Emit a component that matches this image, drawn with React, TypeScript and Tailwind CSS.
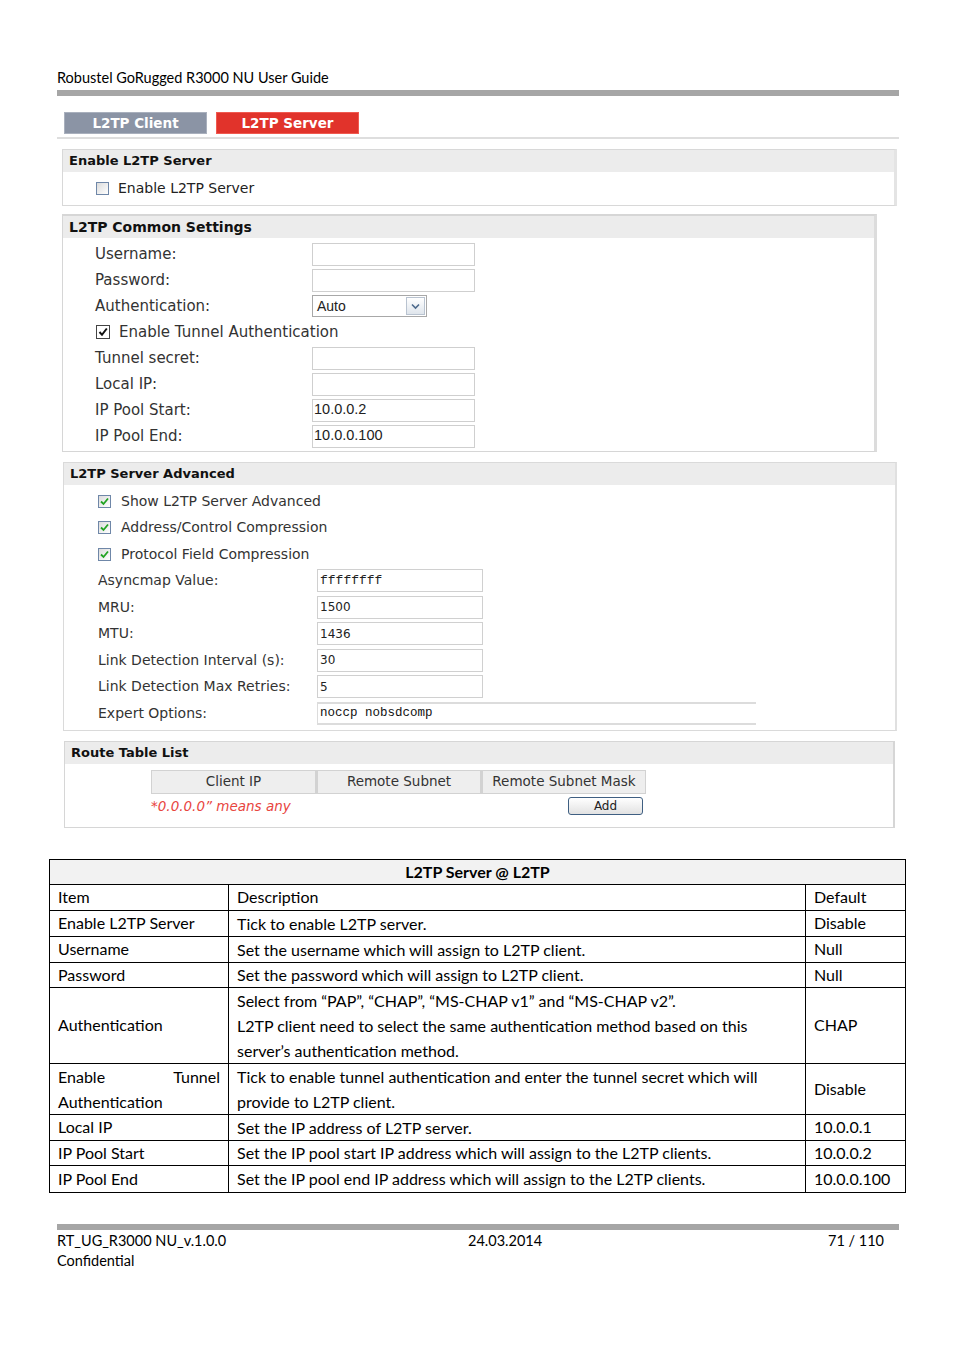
import React from 'react'

const UI = "font-['DejaVu_Sans',Verdana,sans-serif]"
const DOC = "font-['Lato','Open_Sans',sans-serif]"

function BlueBox({ checked }: { checked?: boolean }) {
  return (
    <span className="w-[13px] h-[13px] border border-[#6f87a8] bg-gradient-to-br from-[#dcdcdc] to-white flex items-center justify-center shrink-0">
      {checked && (
        <svg width="9" height="9" viewBox="0 0 9 9">
          <path d="M1 4.5 L3.5 7 L8 1.5" stroke="#22a322" strokeWidth="1.8" fill="none" />
        </svg>
      )}
    </span>
  )
}

function BlackBox() {
  return (
    <span className="w-[14px] h-[14px] border border-[#444] bg-white flex items-center justify-center shrink-0">
      <svg width="10" height="10" viewBox="0 0 10 10">
        <path d="M1.5 5 L4 7.8 L8.8 1.5" stroke="#111" strokeWidth="2" fill="none" />
      </svg>
    </span>
  )
}

function PanelHead({ children, cls }: { children: React.ReactNode; cls: string }) {
  return <div className={`h-[22px] bg-[#ececec] flex items-center font-bold text-[#111] pl-[6px] ${cls}`}>{children}</div>
}

const COMMON = [
  { label: 'Username:', value: '' },
  { label: 'Password:', value: '' },
  { label: 'Authentication:', value: 'select' },
  { label: 'check', value: '' },
  { label: 'Tunnel secret:', value: '' },
  { label: 'Local IP:', value: '' },
  { label: 'IP Pool Start:', value: '10.0.0.2' },
  { label: 'IP Pool End:', value: '10.0.0.100' },
]

const ADVANCED = [
  { label: 'Asyncmap Value:', value: 'ffffffff', mono: true },
  { label: 'MRU:', value: '1500' },
  { label: 'MTU:', value: '1436' },
  { label: 'Link Detection Interval (s):', value: '30' },
  { label: 'Link Detection Max Retries:', value: '5' },
]

const ROWS: { item: string; desc: string[]; def: string; h: string; justify?: boolean }[] = [
  { item: 'Enable L2TP Server', desc: ['Tick to enable L2TP server.'], def: 'Disable', h: 'h-[26px]' },
  { item: 'Username', desc: ['Set the username which will assign to L2TP client.'], def: 'Null', h: 'h-[26px]' },
  { item: 'Password', desc: ['Set the password which will assign to L2TP client.'], def: 'Null', h: 'h-[25px]' },
  {
    item: 'Authentication',
    desc: [
      'Select from \u201cPAP\u201d, \u201cCHAP\u201d, \u201cMS-CHAP v1\u201d and \u201cMS-CHAP v2\u201d.',
      'L2TP client need to select the same authentication method based on this',
      'server\u2019s authentication method.',
    ],
    def: 'CHAP',
    h: 'h-[76px]',
  },
  {
    item: 'Enable Tunnel Authentication',
    desc: ['Tick to enable tunnel authentication and enter the tunnel secret which will', 'provide to L2TP client.'],
    def: 'Disable',
    h: 'h-[51px]',
    justify: true,
  },
  { item: 'Local IP', desc: ['Set the IP address of L2TP server.'], def: '10.0.0.1', h: 'h-[26px]' },
  { item: 'IP Pool Start', desc: ['Set the IP pool start IP address which will assign to the L2TP clients.'], def: '10.0.0.2', h: 'h-[25px]' },
  { item: 'IP Pool End', desc: ['Set the IP pool end IP address which will assign to the L2TP clients.'], def: '10.0.0.100', h: 'h-[26px]' },
]

export default function App() {
  return (
    <div className="w-[954px] h-[1350px] bg-white flex flex-col">
      {/* page header */}
      <div className={`${DOC} ml-[57px] mt-[69px] text-[14.5px] leading-[18px] text-black`}>
        Robustel GoRugged R3000 NU User Guide
      </div>
      <div className="ml-[57px] mt-[3px] w-[842px] h-[6px] bg-[#a6a6a6]" />

      {/* tabs */}
      <div className={`${UI} ml-[64px] mt-[16px] flex gap-[9px] text-[13.5px] font-bold text-white`}>
        <div className="w-[143px] h-[22px] bg-[#8b94a5] border border-[#a9b0bd] flex items-center justify-center">L2TP Client</div>
        <div className="w-[143px] h-[22px] bg-[#e1332b] border border-[#f05a50] flex items-center justify-center">L2TP Server</div>
      </div>
      <div className="ml-[57px] mt-[3px] w-[842px] h-[2px] bg-[#dedede]" />

      {/* Enable L2TP Server */}
      <div className={`${UI} ml-[62px] mt-[10px] w-[835px] border border-[#d8d8d8] border-r-[3px] border-r-[#e4e4e4]`}>
        <PanelHead cls="text-[13px]">Enable L2TP Server</PanelHead>
        <div className="h-[33px] pl-[33px] flex items-center gap-[9px] text-[14px] text-[#222]">
          <BlueBox />
          <span>Enable L2TP Server</span>
        </div>
      </div>

      {/* L2TP Common Settings */}
      <div className={`${UI} ml-[62px] mt-[8px] w-[815px] border border-[#d6d6d6] border-t-[2px] border-r-[3px] border-r-[#dcdcdc]`}>
        <PanelHead cls="text-[14px]">L2TP Common Settings</PanelHead>
        <div className="pt-[3px] pb-[2px] text-[15px] text-[#333]">
          {COMMON.map((r, i) =>
            r.label === 'check' ? (
              <div key={i} className="h-[26px] pl-[33px] flex items-center gap-[9px]">
                <BlackBox />
                <span>Enable Tunnel Authentication</span>
              </div>
            ) : (
              <div key={i} className="h-[26px] pl-[32px] flex items-center">
                <span className="w-[217px]">{r.label}</span>
                {r.value === 'select' ? (
                  <div className="w-[115px] h-[22px] border border-[#a8a8a8] flex items-center font-['Liberation_Sans',Arial,sans-serif] text-[14px] text-[#222]">
                    <span className="flex-1 pl-[4px]">Auto</span>
                    <span className="w-[19px] h-[18px] mr-[1px] border border-[#b9c3d0] bg-gradient-to-b from-white to-[#dfe5ec] flex items-center justify-center">
                      <svg width="9" height="7" viewBox="0 0 9 7">
                        <path d="M1 1.5 L4.5 5 L8 1.5" stroke="#4d6a8c" strokeWidth="1.6" fill="none" />
                      </svg>
                    </span>
                  </div>
                ) : (
                  <div className="w-[163px] h-[23px] border border-[#cfcfcf] flex items-center pl-[1px] font-['Liberation_Sans',Arial,sans-serif] text-[14.5px] text-[#222]">
                    {r.value}
                  </div>
                )}
              </div>
            )
          )}
        </div>
      </div>

      {/* L2TP Server Advanced */}
      <div className={`${UI} ml-[63px] mt-[10px] w-[834px] border border-[#dadada] border-r-[2px] border-r-[#e0e0e0]`}>
        <PanelHead cls="text-[13px]">L2TP Server Advanced</PanelHead>
        <div className="pt-[3px] pb-[3px] text-[14px] text-[#333]">
          {['Show L2TP Server Advanced', 'Address/Control Compression', 'Protocol Field Compression'].map((t) => (
            <div key={t} className="h-[26.5px] pl-[34px] flex items-center gap-[10px]">
              <BlueBox checked />
              <span>{t}</span>
            </div>
          ))}
          {ADVANCED.map((r) => (
            <div key={r.label} className="h-[26.5px] pl-[34px] flex items-center">
              <span className="w-[219px]">{r.label}</span>
              <div
                className={`w-[166px] h-[23px] border border-[#d0d0d0] flex items-center pl-[2px] text-[#222] ${
                  r.mono ? "font-['Liberation_Mono',monospace] text-[13px]" : 'text-[12px]'
                }`}
              >
                {r.value}
              </div>
            </div>
          ))}
          <div className="h-[26.5px] pl-[34px] flex items-center">
            <span className="w-[219px]">Expert Options:</span>
            <div className="w-[439px] h-[23px] border-t-2 border-b-2 border-l border-[#dcdcdc] flex items-center pl-[2px] font-['Liberation_Mono',monospace] text-[12.5px] text-[#111]">
              noccp nobsdcomp
            </div>
          </div>
        </div>
      </div>

      {/* Route Table List */}
      <div className={`${UI} ml-[64px] mt-[10px] w-[831px] border border-[#d6d6d6] border-r-[2px]`}>
        <PanelHead cls="text-[13px]">Route Table List</PanelHead>
        <div className="pl-[86px] pt-[6px] pb-[12px]">
          <div className="flex text-[13.5px] text-[#333]">
            {['Client IP', 'Remote Subnet', 'Remote Subnet Mask'].map((h, i) => (
              <div
                key={h}
                className={`w-[165px] h-[24px] bg-[#eeeeee] border border-[#d2d2d2] flex items-center justify-center ${i > 0 ? 'border-l-[2px]' : ''}`}
              >
                {h}
              </div>
            ))}
          </div>
          <div className="flex items-center mt-[3px] w-[495px] h-[18px]">
            <span className="flex-1 italic text-[13.5px] leading-[18px] text-[#e8463f]">{'*0.0.0.0\u201d means any'}</span>
            <button className="w-[75px] h-[18px] mr-[3px] rounded-[3px] border border-[#3f5f82] bg-gradient-to-b from-white to-[#e2e2e2] text-[12px] leading-none text-[#222] flex items-center justify-center">
              Add
            </button>
          </div>
        </div>
      </div>

      {/* documentation table */}
      <div className={`${DOC} ml-[49px] mt-[31px] w-[857px] border border-black text-[16px] text-black`}>
        <div className="h-[25px] bg-[#f2f2f2] border-b border-black flex items-center justify-center font-bold">
          L2TP Server @ L2TP
        </div>
        <div className="grid grid-cols-[179px_577px_1fr]">
          <div className="h-[26px] border-b border-r border-black flex items-center px-[8px]">Item</div>
          <div className="h-[26px] border-b border-r border-black flex items-center px-[8px]">Description</div>
          <div className="h-[26px] border-b border-black flex items-center px-[8px]">Default</div>
          {ROWS.map((r, i) => {
            const last = i === ROWS.length - 1
            const bb = last ? '' : 'border-b'
            return (
              <React.Fragment key={r.item}>
                <div className={`${r.h} ${bb} border-r border-black flex items-center px-[8px]`}>
                  {r.justify ? (
                    <div className="w-full leading-[25px]">
                      <div className="flex justify-between">
                        <span>Enable</span>
                        <span>Tunnel</span>
                      </div>
                      <div>Authentication</div>
                    </div>
                  ) : (
                    r.item
                  )}
                </div>
                <div className={`${r.h} ${bb} border-r border-black flex flex-col justify-center px-[8px] leading-[25px]`}>
                  {r.desc.map((d) => (
                    <div key={d} className="whitespace-nowrap">{d}</div>
                  ))}
                </div>
                <div className={`${r.h} ${bb} border-black flex items-center px-[8px]`}>{r.def}</div>
              </React.Fragment>
            )
          })}
        </div>
      </div>

      {/* footer */}
      <div className="ml-[57px] mt-[31px] w-[842px] h-[6px] bg-[#a6a6a6]" />
      <div className={`${DOC} ml-[57px] mt-[1px] w-[827px] text-[14.5px] leading-[20px] text-black`}>
        <div className="flex">
          <span className="w-[411px]">RT_UG_R3000 NU_v.1.0.0</span>
          <span className="flex-1">24.03.2014</span>
          <span>71 / 110</span>
        </div>
        <div>Confidential</div>
      </div>
    </div>
  )
}
